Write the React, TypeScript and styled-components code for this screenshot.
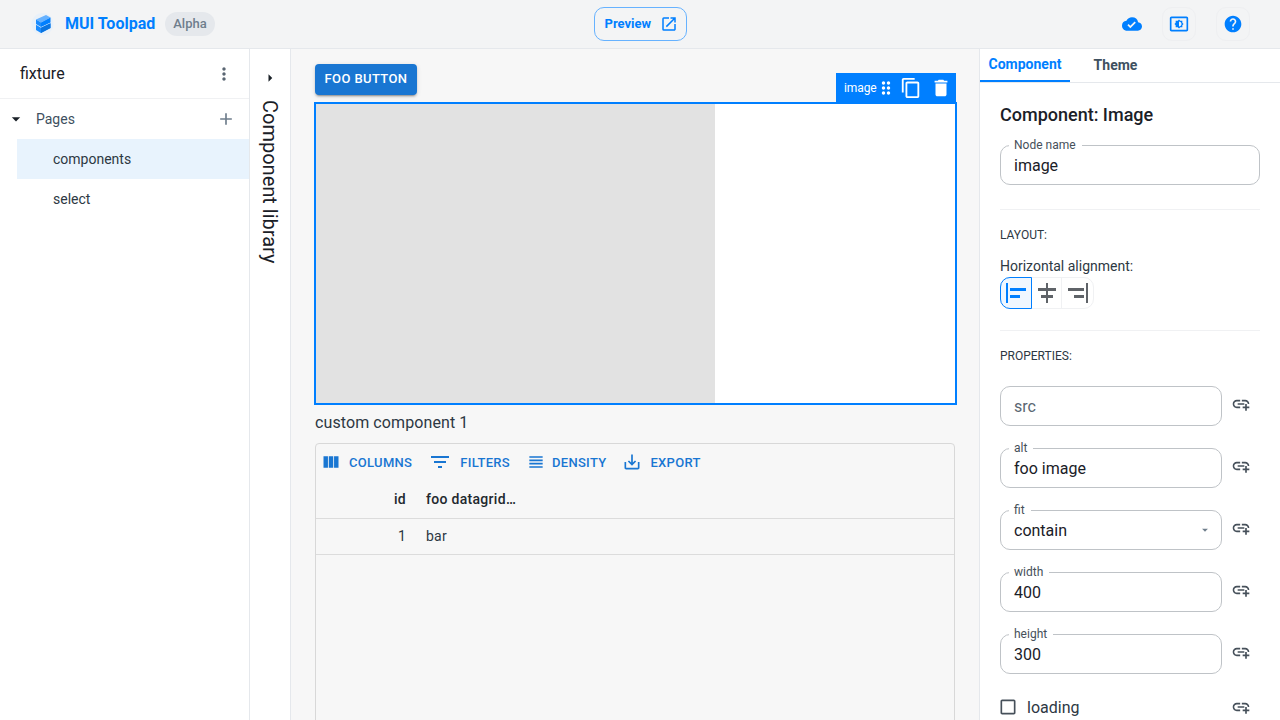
import * as React from "react";
import styled, { createGlobalStyle } from "styled-components";
import {
  MdAdd,
  MdAddLink,
  MdAlignHorizontalCenter,
  MdAlignHorizontalLeft,
  MdAlignHorizontalRight,
  MdArrowDropDown,
  MdArrowRight,
  MdCheckBoxOutlineBlank,
  MdCloudDone,
  MdContentCopy,
  MdDelete,
  MdDragIndicator,
  MdFilterList,
  MdHelp,
  MdMoreVert,
  MdOpenInNew,
  MdSaveAlt,
  MdSettingsBrightness,
  MdViewColumn,
  MdViewHeadline,
} from "react-icons/md";

const BLUE = "#007fff";

const Logo = () => (
  <svg width="32" height="32" viewBox="0 0 32 32">
    <circle cx="16.5" cy="16" r="11" fill="#e9f1f9" />
    <path d="M10 11.5 20 7 24.5 9.5 15 14.5Z" fill="#66b2ff" />
    <path d="M10 11.5 15 14.5 V19 L10 16Z" fill="#1a8cff" />
    <path d="M15 14.5 24.5 9.5 V14.5 L15 19Z" fill="#007fff" />
    <path d="M10 16.8 15 19.8 24.5 15.3 V20 L15 25 10 22Z" fill="#1a8cff" />
    <path d="M15 19.8 24.5 15.3 V20 L15 25Z" fill="#0a74e0" />
  </svg>
);

const App: React.FC = () => {
  return (
    <Page>
      <GlobalStyle />
      <Header>
        <Brand>
          <Logo />
          <BrandName>MUI Toolpad</BrandName>
          <AlphaChip>Alpha</AlphaChip>
        </Brand>
        <PreviewButton>
          Preview
          <MdOpenInNew size={18} />
        </PreviewButton>
        <HeaderActions>
          <MdCloudDone size={20} />
          <IconSquare>
            <MdSettingsBrightness size={20} />
          </IconSquare>
          <IconSquare>
            <MdHelp size={20} />
          </IconSquare>
        </HeaderActions>
      </Header>

      <Body>
        <LeftPanel>
          <AppRow>
            fixture
            <MdMoreVert size={20} color="#5a6672" />
          </AppRow>
          <PagesRow>
            <MdArrowDropDown size={20} color="#1a2027" />
            <PagesLabel>Pages</PagesLabel>
            <MdAdd size={20} color="#6f7e8c" />
          </PagesRow>
          <PageItem $selected>components</PageItem>
          <PageItem>select</PageItem>
        </LeftPanel>

        <LibraryRail>
          <MdArrowRight size={18} color="#1a2027" />
          <RailLabel>Component library</RailLabel>
        </LibraryRail>

        <Canvas>
          <FooButton>FOO BUTTON</FooButton>
          <ImageFrame>
            <NodeToolbar>
              <NodeName>image</NodeName>
              <MdDragIndicator size={20} />
              <MdContentCopy size={22} />
              <MdDelete size={22} />
            </NodeToolbar>
            <ImagePlaceholder />
          </ImageFrame>
          <CustomText>custom component 1</CustomText>
          <Grid>
            <GridToolbar>
              <GridTool $gap={8}>
                <MdViewColumn size={20} />
                COLUMNS
              </GridTool>
              <GridTool $gap={8}>
                <MdFilterList size={24} />
                FILTERS
              </GridTool>
              <GridTool $gap={6}>
                <MdViewHeadline size={20} />
                DENSITY
              </GridTool>
              <GridTool $gap={8}>
                <MdSaveAlt size={20} />
                EXPORT
              </GridTool>
            </GridToolbar>
            <GridHeader>
              <IdCell>id</IdCell>
              <ValueCell>foo datagrid…</ValueCell>
            </GridHeader>
            <GridRow>
              <IdCell>1</IdCell>
              <ValueCell>bar</ValueCell>
            </GridRow>
          </Grid>
        </Canvas>

        <RightPanel>
          <Tabs>
            <Tab $active>Component</Tab>
            <Tab>Theme</Tab>
          </Tabs>
          <Inspector>
            <InspectorTitle>Component: Image</InspectorTitle>
            <Field label="Node name" value="image" />
            <Divider $top={24} />
            <SectionLabel>LAYOUT:</SectionLabel>
            <AlignLabel>Horizontal alignment:</AlignLabel>
            <ToggleGroup>
              <ToggleButton $active>
                <MdAlignHorizontalLeft size={24} />
              </ToggleButton>
              <ToggleButton>
                <MdAlignHorizontalCenter size={24} />
              </ToggleButton>
              <ToggleButton>
                <MdAlignHorizontalRight size={24} />
              </ToggleButton>
            </ToggleGroup>
            <Divider $top={21} />
            <SectionLabel>PROPERTIES:</SectionLabel>
            <PropList>
              <PropRow>
                <Field placeholder="src" />
                <BindIcon />
              </PropRow>
              <PropRow>
                <Field label="alt" value="foo image" />
                <BindIcon />
              </PropRow>
              <PropRow>
                <Field label="fit" value="contain" select />
                <BindIcon />
              </PropRow>
              <PropRow>
                <Field label="width" value="400" />
                <BindIcon />
              </PropRow>
              <PropRow>
                <Field label="height" value="300" />
                <BindIcon />
              </PropRow>
            </PropList>
            <CheckRow>
              <CheckLabel>
                <MdCheckBoxOutlineBlank size={20} color="#46505a" />
                loading
              </CheckLabel>
              <BindIcon />
            </CheckRow>
          </Inspector>
        </RightPanel>
      </Body>
    </Page>
  );
};

const Field: React.FC<{ label?: string; value?: string; placeholder?: string; select?: boolean }> = ({
  label,
  value,
  placeholder,
  select,
}) => (
  <FieldBox>
    {label && <FieldLegend>{label}</FieldLegend>}
    {placeholder ? <FieldPlaceholder>{placeholder}</FieldPlaceholder> : <span>{value}</span>}
    {select && <MdArrowDropDown size={14} color="#6f7e8c" />}
  </FieldBox>
);

const BindIcon = () => (
  <BindSlot>
    <MdAddLink size={20} />
  </BindSlot>
);

export default App;

/* Styles */
const GlobalStyle = createGlobalStyle`
  html, body {
    margin: 0;
    height: 100%;
    overflow: hidden;
  }
  body {
    font-family: Roboto, "Liberation Sans", sans-serif;
    color: #1a2027;
    background: #fff;
  }
  * {
    box-sizing: border-box;
  }
`;
const Page = styled.div`
  width: 1280px;
  height: 720px;
  display: flex;
  flex-direction: column;
  overflow: hidden;
`;
const Header = styled.header`
  height: 49px;
  flex: none;
  display: grid;
  grid-template-columns: 1fr auto 1fr;
  align-items: center;
  background: #f3f4f5;
  border-bottom: 1px solid #e5e8ec;
  padding: 0 30px 1px 26px;
`;
const Brand = styled.div`
  display: flex;
  align-items: center;
`;
const BrandName = styled.span`
  margin-left: 7px;
  font-size: 16px;
  font-weight: 700;
  color: ${BLUE};
`;
const AlphaChip = styled.span`
  margin-left: 10px;
  height: 24px;
  padding: 0 8px;
  display: flex;
  align-items: center;
  border-radius: 12px;
  background: #e5e8ec;
  color: #6f7e8c;
  font-size: 13px;
  font-weight: 500;
`;
const PreviewButton = styled.button`
  width: 93px;
  height: 34px;
  margin-left: 4px;
  padding: 0 8px 0 10px;
  display: flex;
  align-items: center;
  justify-content: space-between;
  border: 1px solid #66b2ff;
  border-radius: 10px;
  background: transparent;
  color: ${BLUE};
  font-family: inherit;
  font-size: 13px;
  font-weight: 700;
`;
const HeaderActions = styled.div`
  display: flex;
  align-items: center;
  justify-content: flex-end;
  gap: 20px;
  color: ${BLUE};
`;
const IconSquare = styled.span`
  width: 34px;
  height: 34px;
  display: flex;
  align-items: center;
  justify-content: center;
  border: 1px solid #eeeff1;
  border-radius: 10px;
`;
const Body = styled.div`
  flex: 1;
  min-height: 0;
  display: flex;
`;
const LeftPanel = styled.aside`
  width: 250px;
  flex: none;
  border-right: 1px solid #e5e8ec;
  background: #fff;
`;
const AppRow = styled.div`
  height: 50px;
  padding: 0 15px 0 20px;
  display: flex;
  align-items: center;
  justify-content: space-between;
  font-size: 16px;
  border-bottom: 1px solid #f0f1f3;
`;
const PagesRow = styled.div`
  height: 40px;
  padding: 0 13px 0 6px;
  display: flex;
  align-items: center;
  font-size: 14px;
  color: #3e5060;
`;
const PagesLabel = styled.span`
  flex: 1;
  margin-left: 10px;
`;
const PageItem = styled.div<{ $selected?: boolean }>`
  height: 40px;
  margin-left: 17px;
  padding-left: 36px;
  display: flex;
  align-items: center;
  font-size: 14px;
  background: ${(p) => (p.$selected ? "#e8f3fd" : "transparent")};
  color: #2d3843;
`;
const LibraryRail = styled.div`
  width: 41px;
  flex: none;
  padding-top: 20px;
  display: flex;
  flex-direction: column;
  align-items: center;
  border-right: 1px solid #e5e8ec;
  background: #fff;
`;
const RailLabel = styled.span`
  margin-top: 13px;
  writing-mode: vertical-rl;
  font-size: 20px;
  line-height: 24px;
  color: #1a2027;
`;
const Canvas = styled.main`
  width: 689px;
  flex: none;
  padding: 15px 24px 0 23px;
  background: #f7f7f7;
  border-right: 1px solid #e5e8ec;
`;
const FooButton = styled.button`
  display: block;
  width: 102px;
  height: 31px;
  margin: 0 0 7px 1px;
  padding: 0 0 2px;
  border: 0;
  border-radius: 4px;
  background: #1976d2;
  color: #fff;
  font-family: inherit;
  font-size: 13px;
  font-weight: 500;
  letter-spacing: 0.4px;
  box-shadow: 0 3px 1px -2px rgba(0, 0, 0, 0.2), 0 2px 2px rgba(0, 0, 0, 0.14), 0 1px 5px rgba(0, 0, 0, 0.12);
`;
const ImageFrame = styled.div`
  position: relative;
  width: 643px;
  height: 303px;
  border: 2px solid ${BLUE};
  background: #fff;
`;
const NodeToolbar = styled.div`
  position: absolute;
  right: -1px;
  bottom: calc(100% + 1px);
  width: 120px;
  height: 30px;
  padding-left: 8px;
  display: flex;
  align-items: center;
  background: ${BLUE};
  color: #fff;
  svg:nth-of-type(2) {
    margin-left: 4px;
  }
  svg:nth-of-type(3) {
    margin-left: 8px;
  }
`;
const NodeName = styled.span`
  width: 32px;
  font-size: 12px;
  letter-spacing: -0.1px;
`;
const ImagePlaceholder = styled.div`
  width: 399px;
  height: 299px;
  background: #e2e2e2;
`;
const CustomText = styled.div`
  margin: 6px 0 0 1px;
  height: 24px;
  line-height: 24px;
  font-size: 16px;
  letter-spacing: 0.1px;
  color: #2d3843;
`;
const Grid = styled.div`
  width: 640px;
  height: 400px;
  margin: 8px 0 0 1px;
  border: 1px solid #d8d8d8;
  border-radius: 4px;
`;
const GridToolbar = styled.div`
  height: 36px;
  padding: 0 0 0 5px;
  display: flex;
  align-items: center;
  gap: 16px;
`;
const GridTool = styled.span<{ $gap: number }>`
  display: flex;
  align-items: center;
  gap: ${(p) => p.$gap}px;
  color: #1976d2;
  font-size: 13px;
  font-weight: 500;
  letter-spacing: 0.3px;
`;
const GridHeader = styled.div`
  height: 39px;
  padding-bottom: 1px;
  display: flex;
  align-items: center;
  border-bottom: 1px solid #dcdcdc;
  font-size: 14px;
  font-weight: 500;
  letter-spacing: 0.3px;
  color: #22282e;
`;
const GridRow = styled.div`
  height: 36px;
  padding-bottom: 1px;
  display: flex;
  align-items: center;
  border-bottom: 1px solid #dcdcdc;
  font-size: 14px;
  letter-spacing: 0.2px;
  color: #2d3843;
`;
const IdCell = styled.span`
  width: 90px;
  text-align: right;
`;
const ValueCell = styled.span`
  margin-left: 20px;
`;
const RightPanel = styled.aside`
  width: 300px;
  flex: none;
  background: #fff;
`;
const Tabs = styled.div`
  height: 34px;
  padding-bottom: 1px;
  display: flex;
  border-bottom: 1px solid #e5e8ec;
`;
const Tab = styled.div<{ $active?: boolean }>`
  height: 33px;
  width: ${(p) => (p.$active ? "90px" : "91px")};
  margin-bottom: -1px;
  display: flex;
  align-items: center;
  justify-content: center;
  padding-bottom: 2px;
  font-size: 14px;
  font-weight: 700;
  color: ${(p) => (p.$active ? BLUE : "#3e5060")};
  border-bottom: ${(p) => (p.$active ? `2px solid ${BLUE}` : "0")};
`;
const Inspector = styled.div`
  padding: 20px 20px 0;
`;
const InspectorTitle = styled.h2`
  margin: 0 0 18px;
  font-size: 18px;
  line-height: 24px;
  font-weight: 500;
  color: #1a2027;
`;
const FieldBox = styled.div`
  position: relative;
  flex: 1;
  height: 40px;
  padding: 0 9px 0 13px;
  display: flex;
  align-items: center;
  justify-content: space-between;
  border: 1px solid #bfc3c7;
  border-radius: 10px;
  font-size: 16px;
  color: #1a2027;
  background: #fff;
`;
const FieldLegend = styled.label`
  position: absolute;
  left: 8px;
  top: -8px;
  padding: 0 6px 0 5px;
  background: #fff;
  font-size: 12px;
  line-height: 15px;
  color: #46505a;
`;
const FieldPlaceholder = styled.span`
  color: #5a6672;
`;
const Divider = styled.hr<{ $top: number }>`
  margin: ${(p) => p.$top}px 0 0;
  border: 0;
  border-top: 1px solid #f0f1f3;
`;
const SectionLabel = styled.div`
  margin-top: 18px;
  font-size: 12px;
  line-height: 15px;
  color: #2d3843;
`;
const AlignLabel = styled.div`
  margin-top: 15px;
  font-size: 14px;
  line-height: 17px;
  color: #2d3843;
`;
const ToggleGroup = styled.div`
  margin-top: 2px;
  width: 94px;
  height: 32px;
  display: flex;
  border: 1px solid #f0f1f3;
  border-radius: 10px;
`;
const ToggleButton = styled.span<{ $active?: boolean }>`
  width: ${(p) => (p.$active ? "32px" : "31px")};
  margin: ${(p) => (p.$active ? "-1px 0 -1px -1px" : "0")};
  display: flex;
  align-items: center;
  justify-content: center;
  color: ${(p) => (p.$active ? BLUE : "#5f6368")};
  background: ${(p) => (p.$active ? "#f0f7ff" : "transparent")};
  border: ${(p) => (p.$active ? `1px solid ${BLUE}` : "0")};
  border-right: 1px solid ${(p) => (p.$active ? BLUE : "#f0f1f3")};
  border-radius: ${(p) => (p.$active ? "10px 0 0 10px" : "0")};
  &:last-child {
    border-right: 0;
  }
`;
const PropList = styled.div`
  margin-top: 22px;
  display: flex;
  flex-direction: column;
  gap: 22px;
`;
const PropRow = styled.div`
  display: flex;
  align-items: center;
`;
const BindSlot = styled.span`
  width: 38px;
  padding: 0 0 5px 9px;
  display: flex;
  color: #46505a;
`;
const CheckRow = styled.div`
  margin-top: 23px;
  display: flex;
  align-items: center;
  justify-content: space-between;
  ${BindSlot} {
    padding-bottom: 0;
  }
`;
const CheckLabel = styled.span`
  display: flex;
  align-items: center;
  gap: 9px;
  margin-left: -2px;
  font-size: 16px;
  color: #2d3843;
`;
